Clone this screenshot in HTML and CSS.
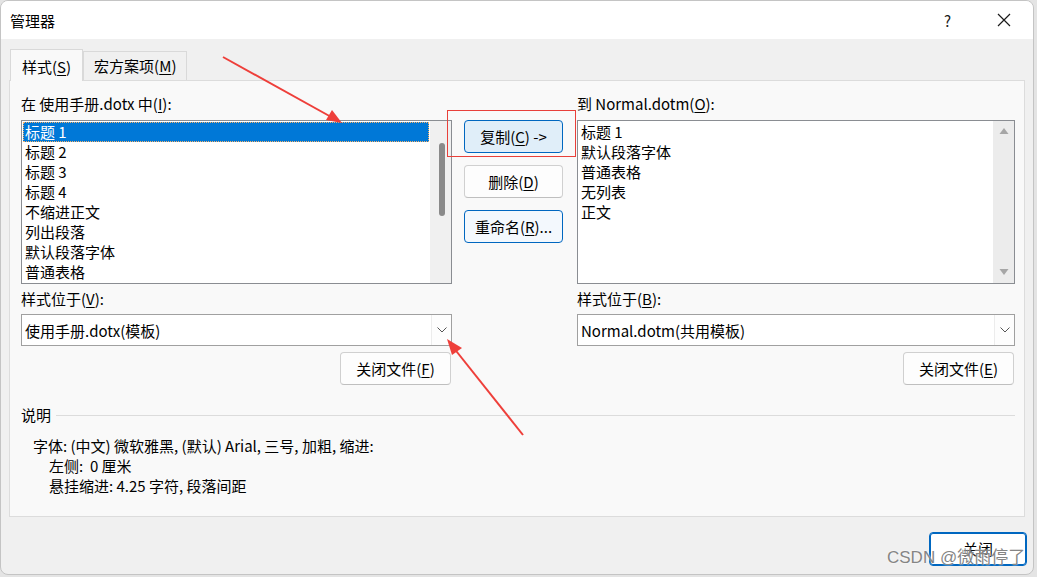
FILE: index.html
```html
<!DOCTYPE html>
<html lang="zh-CN">
<head>
<meta charset="utf-8">
<title>管理器</title>
<link rel="stylesheet" href="styles.css">
</head>
<body>
<div class="window">
  <div class="titlebar">
    <span class="title">管理器</span>
    <span class="help">?</span>
    <span class="close-x"><svg width="14" height="14" viewBox="0 0 14 14"><path d="M1 1 L13 13 M13 1 L1 13" stroke="#1a1a1a" stroke-width="1.2" fill="none"/></svg></span>
  </div>
  <div class="tabs">
    <div class="tab active">样式(<u>S</u>)</div>
    <div class="tab">宏方案项(<u>M</u>)</div>
  </div>
  <div class="panel">
    <div class="main">
      <div class="lbl c1 r1">在 使用手册.dotx 中(<u>I</u>):</div>
      <div class="lbl c5 r1">到 Normal.dotm(<u>O</u>):</div>

      <div class="list c1 r2">
        <div class="items">
          <div class="item sel">标题 1</div>
          <div class="item">标题 2</div>
          <div class="item">标题 3</div>
          <div class="item">标题 4</div>
          <div class="item">不缩进正文</div>
          <div class="item">列出段落</div>
          <div class="item">默认段落字体</div>
          <div class="item">普通表格</div>
        </div>
        <div class="vscroll"><div class="thumb"></div></div>
      </div>

      <div class="btns c3 r2">
        <div class="btn accent light">复制(<u>C</u>) -&gt;</div>
        <div class="btn">删除(<u>D</u>)</div>
        <div class="btn accent">重命名(<u>R</u>)...</div>
      </div>

      <div class="list c5 r2">
        <div class="items">
          <div class="item">标题 1</div>
          <div class="item">默认段落字体</div>
          <div class="item">普通表格</div>
          <div class="item">无列表</div>
          <div class="item">正文</div>
        </div>
        <div class="vscroll arrows">
          <svg width="10" height="8" viewBox="0 0 10 8"><path d="M5 1 L9.5 7 L0.5 7 Z" fill="#a6a6a6"/></svg>
          <svg width="10" height="8" viewBox="0 0 10 8"><path d="M0.5 1 L9.5 1 L5 7 Z" fill="#a6a6a6"/></svg>
        </div>
      </div>

      <div class="lbl loc c1 r3">样式位于(<u>V</u>):</div>
      <div class="lbl loc c5 r3">样式位于(<u>B</u>):</div>

      <div class="combo c1 r4">
        <span class="val">使用手册.dotx(模板)</span>
        <span class="drop"><svg width="10" height="6" viewBox="0 0 10 6"><path d="M0.5 0.5 L5 5 L9.5 0.5" stroke="#555" stroke-width="1" fill="none"/></svg></span>
      </div>
      <div class="combo c5 r4">
        <span class="val">Normal.dotm(共用模板)</span>
        <span class="drop"><svg width="10" height="6" viewBox="0 0 10 6"><path d="M0.5 0.5 L5 5 L9.5 0.5" stroke="#555" stroke-width="1" fill="none"/></svg></span>
      </div>

      <div class="btn file c1 r5">关闭文件(<u>F</u>)</div>
      <div class="btn file c5 r5">关闭文件(<u>E</u>)</div>
    </div>

    <div class="desc">
      <div class="desc-head"><span>说明</span><span class="rule"></span></div>
      <div class="desc-body">
        <div class="dl">字体: (中文) 微软雅黑, (默认) Arial, 三号, 加粗, 缩进:</div>
        <div class="dl ind">左侧:&nbsp; 0 厘米</div>
        <div class="dl ind">悬挂缩进: 4.25 字符, 段落间距</div>
      </div>
    </div>
  </div>
  <div class="footer">
    <div class="btn default">关闭</div>
  </div>
</div>

<div class="watermark">CSDN @微雨停了</div>

<svg class="annot" width="1037" height="577" viewBox="0 0 1037 577">
  <rect x="447.5" y="110.5" width="128" height="46" fill="none" stroke="#e8403a" stroke-width="1"/>
  <line x1="223" y1="57" x2="333" y2="118" stroke="#ee3f3a" stroke-width="2"/>
  <path d="M342 123 L326 120 L332 110 Z" fill="#ee3f3a"/>
  <line x1="523" y1="435" x2="453" y2="347" stroke="#ee3f3a" stroke-width="2"/>
  <path d="M447 339 L462 348 L452 355 Z" fill="#ee3f3a"/>
</svg>
</body>
</html>
```

FILE: styles.css
```css
* { box-sizing: border-box; }
html, body { margin: 0; padding: 0; }
body {
  width: 1037px;
  height: 577px;
  background: #e4e4e4;
  font-family: "Noto Sans CJK SC", "Noto Sans", sans-serif;
  font-size: 15px;
  color: #000;
  position: relative;
  overflow: hidden;
}
u { text-decoration: underline; text-underline-offset: 2px; }

.window {
  width: 1034px;
  height: 575px;
  background: #f0f0f0;
  border: 1px solid #c4c4c4;
  border-radius: 8px;
  overflow: hidden;
}

.titlebar {
  height: 38px;
  background: #fff;
  display: flex;
  align-items: center;
  padding-left: 9px;
}
.title { font-size: 15px; flex: 1; }
.help { width: 12px; margin-right: 41px; font-size: 15px; color: #1a1a1a; }
.close-x { width: 14px; height: 14px; margin-right: 22px; display: flex; }

.tabs {
  height: 42px;
  display: flex;
  align-items: flex-end;
  padding-left: 9px;
  margin-bottom: -1px;
  position: relative;
  z-index: 2;
}
.tab {
  height: 29px;
  margin-bottom: 1px;
  padding: 0 10px;
  display: flex;
  align-items: center;
  border: 1px solid #d9d9d9;
  border-bottom: none;
  background: #f0f0f0;
  line-height: 20px;
}
.tab.active {
  height: 32px;
  margin-bottom: 0;
  background: #f9f9f9;
  padding: 0 11px;
  padding-top: 2px;
}

.panel {
  margin: 0 8px;
  height: 437px;
  background: #f9f9f9;
  border: 1px solid #dcdcdc;
  padding: 13px 9px 0 11px;
  position: relative;
  z-index: 1;
}

.main {
  display: grid;
  grid-template-columns: 431px 12px 99px 14px 438px;
}
.c1 { grid-column: 1; }
.c3 { grid-column: 3; }
.c5 { grid-column: 5; }
.r1 { grid-row: 1; }
.r2 { grid-row: 2; }
.r3 { grid-row: 3; }
.r4 { grid-row: 4; }
.r5 { grid-row: 5; }

.lbl { line-height: 20px; height: 20px; margin-bottom: 6px; white-space: nowrap; }
.lbl.loc { margin-top: 5px; margin-bottom: 5px; }

.list {
  height: 164px;
  background: #fff;
  border: 1px solid #8a8d92;
  display: flex;
}
.items { flex: 1; padding: 1px 1px 0 1px; }
.item {
  height: 20px;
  line-height: 20px;
  padding-left: 2px;
  white-space: nowrap;
}
.item.sel {
  background: #0078d7;
  color: #fff;
  outline: 1px dotted #f7b26a;
  outline-offset: -1px;
}
.vscroll {
  width: 21px;
  background: #f0f0f0;
  display: flex;
  flex-direction: column;
  align-items: center;
}
.vscroll .thumb {
  width: 6px;
  height: 73px;
  margin-top: 22px;
  margin-left: 2px;
  background: #8a8a8a;
  border-radius: 3px;
}
.vscroll.arrows {
  justify-content: space-between;
  padding: 6px 0 7px;
  background: #ececec;
}

.btns { display: flex; flex-direction: column; gap: 12px; }
.btn {
  height: 33px;
  display: flex;
  align-items: center;
  justify-content: center;
  border: 1px solid #d0d0d0;
  border-bottom-color: #bfbfbf;
  border-radius: 4px;
  background: #fdfdfd;
  white-space: nowrap;
  line-height: 20px;
}
.btn.accent { border-color: #0067c0; background: #f3f8fd; }
.btn.accent.light { background: #e0eef9; }

.combo {
  height: 32px;
  margin-bottom: 6px;
  background: #fff;
  border: 1px solid #a0a0a0;
  display: flex;
  align-items: center;
  padding-left: 3px;
}
.combo .val { flex: 1; white-space: nowrap; }
.combo .drop {
  width: 20px;
  height: 30px;
  border-left: 1px solid #ececec;
  display: flex;
  align-items: center;
  justify-content: center;
  background: #fdfdfd;
}

.btn.file { width: 111px; justify-self: end; margin-right: 1px; }

.desc { margin-top: 20px; }
.desc-head { display: flex; align-items: center; gap: 5px; line-height: 20px; height: 20px; }
.desc-head .rule { flex: 1; height: 1px; background: #dcdcdc; }
.desc-body { margin-top: 11px; padding-left: 12px; }
.dl { line-height: 20px; height: 20px; white-space: nowrap; }
.dl.ind { padding-left: 16px; }

.footer {
  display: flex;
  justify-content: flex-end;
  padding-right: 6px;
  margin-top: 15px;
}
.btn.default {
  width: 98px;
  height: 34px;
  background: #fff;
  border: 1px solid #0067c0;
  box-shadow: inset 0 0 0 1px #0067c0;
}

.watermark {
  position: absolute;
  left: 887px;
  top: 546px;
  font-size: 17px;
  line-height: 24px;
  color: #858585;
  text-shadow: 0 0 2px #fff;
  font-family: "Liberation Sans", "Noto Sans CJK SC", sans-serif;
  white-space: nowrap;
  z-index: 5;
}

.annot { position: absolute; left: 0; top: 0; pointer-events: none; z-index: 10; }
```
